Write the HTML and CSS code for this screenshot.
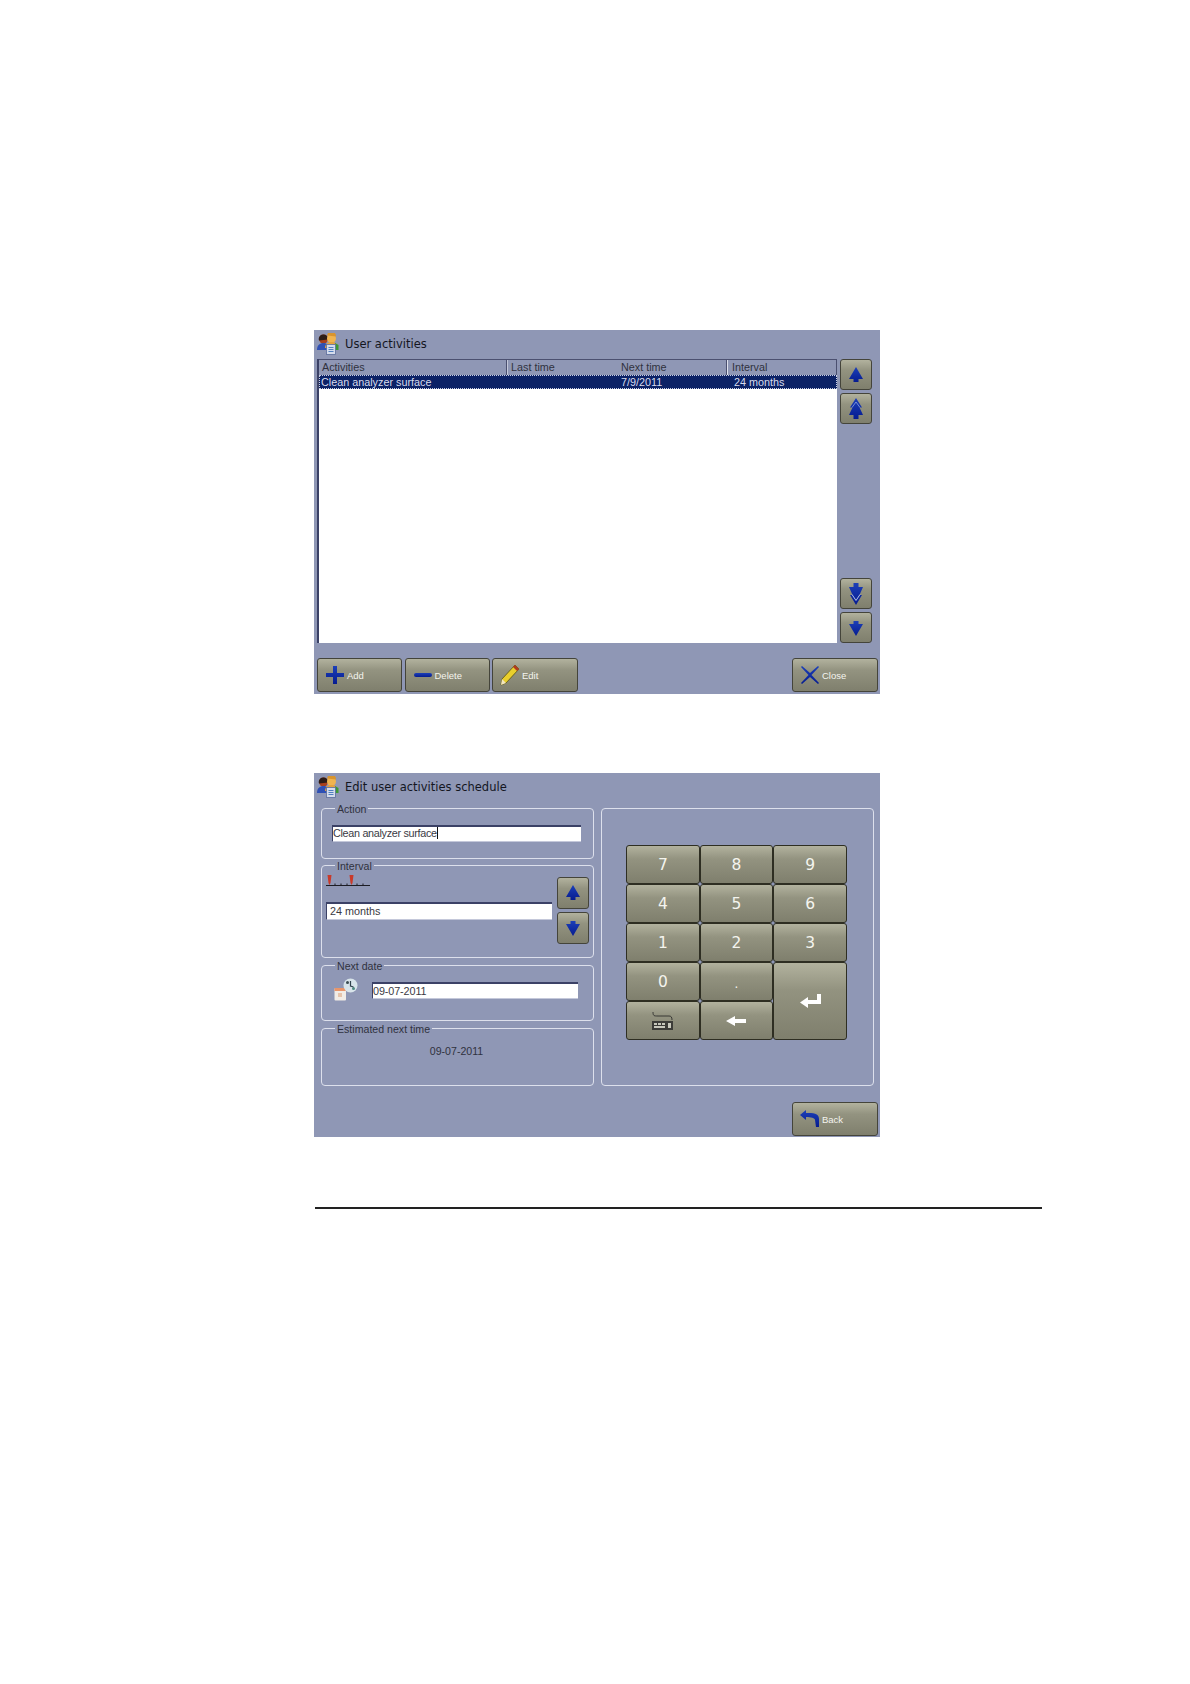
FILE: index.html
```html
<!DOCTYPE html>
<html lang="en">
<head>
    <meta charset="UTF-8">
    <title>User activities</title>
    <link rel="stylesheet" href="styles.css">
</head>
<body>
<svg class="defs" width="0" height="0">
    <defs>
        <linearGradient id="blue" x1="0" y1="0" x2="0" y2="1">
            <stop offset="0" stop-color="#1c3fb8"/>
            <stop offset="1" stop-color="#061c90"/>
        </linearGradient>
        <symbol id="users" viewBox="0 0 22 22">
            <circle cx="6.500" cy="6" r="4.500" fill="#a8401c"/>
            <path d="M6 1.500a4.500 4.500 0 0 0-4 6l9-1a4.500 4.500 0 0 0-5-5z" fill="#2c1c16"/>
            <path d="M0 17c0-5 3-7 6.500-7S12 12 12 17z" fill="#2f50b4"/>
            <circle cx="14.500" cy="5.500" r="4.500" fill="#f0b450"/>
            <path d="M10 2.500a4.500 4.500 0 0 1 9 1z" fill="#d8942e"/>
            <path d="M8 15c0-4 3-6 6.500-6s6.500 2 6.500 6z" fill="#e8a23c"/>
            <path d="M18 10l3.500 2v5H18z" fill="#3c9a34"/>
            <rect x="9.500" y="11.500" width="9" height="10" fill="#d5dcec" stroke="#5a6d9c" stroke-width="0.800"/>
            <path d="M11.500 14.500h5M11.500 16.500h5M11.500 18.500h5" stroke="#4f7fc0" stroke-width="1"/>
        </symbol>
        <symbol id="up" viewBox="0 0 16 16">
            <path d="M8 0L15 12H10.500V15H5.500V12H1z" fill="url(#blue)"/>
        </symbol>
        <symbol id="down" viewBox="0 0 16 16">
            <path d="M5.500 1H10.500V4H15L8 16L1 4H5.500z" fill="url(#blue)"/>
        </symbol>
        <symbol id="up2" viewBox="0 0 16 22">
            <path d="M8 0L14 9.500H11.500L15 17H10.500V21H5.500V17H1L4.500 9.500H2z" fill="url(#blue)"/>
            <path d="M4 9.500L8 4l4 5.500" fill="none" stroke="#8fa4e0" stroke-width="0.800"/>
        </symbol>
        <symbol id="down2" viewBox="0 0 16 22">
            <path d="M5.500 0H10.500V4H15L11.500 12H14L8 22L2 12H4.500L1 4H5.500z" fill="url(#blue)"/>
            <path d="M4 11.500L8 17.500l4-6" fill="none" stroke="#b4c0e8" stroke-width="1"/>
        </symbol>
    </defs>
</svg>

<div class="page">
    <div class="window">
        <div class="title">
            <svg class="title-icon"><use href="#users"/></svg>
            <span>User activities</span>
        </div>
        <div class="list-area">
            <div class="list">
                <div class="list-row list-head">
                    <div class="col-divider">Activities</div>
                    <div>Last time</div>
                    <div class="col-divider">Next time</div>
                    <div class="col-divider">Interval</div>
                </div>
                <div class="list-row selected">
                    <div>Clean analyzer surface</div>
                    <div></div>
                    <div>7/9/2011</div>
                    <div>24 months</div>
                </div>
            </div>
            <div class="scroll-btns">
                <button class="btn square"><svg width="16" height="16"><use href="#up"/></svg></button>
                <button class="btn square"><svg width="16" height="22"><use href="#up2"/></svg></button>
                <div class="spacer"></div>
                <button class="btn square"><svg width="16" height="22"><use href="#down2"/></svg></button>
                <button class="btn square"><svg width="16" height="16"><use href="#down"/></svg></button>
            </div>
        </div>
        <div class="footer first-footer">
            <button class="btn action">
                <svg width="20" height="20" viewBox="0 0 20 20">
                    <path d="M8 1h4v7h7v4h-7v7H8v-7H1V8h7z" fill="url(#blue)"/>
                </svg>
                <span>Add</span>
            </button>
            <button class="btn action">
                <svg width="20" height="20" viewBox="0 0 20 20">
                    <rect x="1" y="8" width="18" height="4" rx="2" fill="url(#blue)"/>
                </svg>
                <span>Delete</span>
            </button>
            <button class="btn action">
                <svg width="20" height="24" viewBox="0 0 20 24">
                    <path d="M15 2l4 4L6 20l-5 2 1-6z" fill="#e9cf2c" stroke="#5c5410" stroke-width="0.800"/>
                    <path d="M15 2l4 4-2 2-4-4z" fill="#b03a20"/>
                    <path d="M1 22l1-6 4 4z" fill="#f2e6c0"/>
                </svg>
                <span>Edit</span>
            </button>
            <button class="btn action push">
                <svg width="20" height="20" viewBox="0 0 20 20">
                    <path d="M2 1l8 7 8-7 1 1-7.500 8L19 18l-1 1-8-7-8 7-1-1 7.500-8L1 2z" fill="url(#blue)"/>
                </svg>
                <span>Close</span>
            </button>
        </div>
    </div>

    <div class="window second">
        <div class="title title-tall">
            <svg class="title-icon"><use href="#users"/></svg>
            <span>Edit user activities schedule</span>
        </div>
        <div class="edit-area">
            <div class="edit-left">
                <div class="group action-group">
                    <div class="legend">Action</div>
                    <div class="field action-field">Clean analyzer surface<i class="caret"></i></div>
                </div>
                <div class="group interval-group">
                    <div class="legend">Interval</div>
                    <div class="interval-row">
                        <div class="interval-left">
                            <svg class="ruler" width="44" height="12" viewBox="0 0 44 12">
                                <path d="M0 10.500h44M9 8.500v2M15 8.500v2M21 8.500v2M31 8.500v2M37 8.500v2" stroke="#1c1c24" stroke-width="1" fill="none"/>
                                <path d="M1.500 0h4l-1 8-1 2-1-2zM23.500 0h4l-1 8-1 2-1-2z" fill="#c83a2a"/>
                            </svg>
                            <div class="field interval-field">24 months</div>
                        </div>
                        <div class="interval-btns">
                            <button class="btn small"><svg width="16" height="16"><use href="#up"/></svg></button>
                            <button class="btn small"><svg width="16" height="16"><use href="#down"/></svg></button>
                        </div>
                    </div>
                </div>
                <div class="group next-group">
                    <div class="legend">Next date</div>
                    <div class="next-row">
                        <svg width="24" height="23" viewBox="0 0 24 23">
                            <rect x="0.500" y="10" width="11.500" height="12.500" rx="1" fill="#f2ece6"/>
                            <rect x="0.500" y="10" width="11.500" height="3" fill="#e8956a"/>
                            <rect x="4" y="15" width="4" height="4" fill="#e6c4ac"/>
                            <circle cx="16.500" cy="7.500" r="7" fill="#d8e4ea"/>
                            <circle cx="13.500" cy="4.500" r="1.500" fill="#3a4a50"/>
                            <circle cx="19.500" cy="10.500" r="1.500" fill="#4e8a80"/>
                            <path d="M16.500 3v5l3 1" stroke="#30424c" stroke-width="1.200" fill="none"/>
                        </svg>
                        <div class="field next-field">09-07-2011</div>
                    </div>
                </div>
                <div class="group est-group">
                    <div class="legend">Estimated next time</div>
                    <div class="est-value">09-07-2011</div>
                </div>
            </div>
            <div class="group keypad-group">
                <div class="keypad">
                    <button class="btn key">7</button>
                    <button class="btn key">8</button>
                    <button class="btn key">9</button>
                    <button class="btn key">4</button>
                    <button class="btn key">5</button>
                    <button class="btn key">6</button>
                    <button class="btn key">1</button>
                    <button class="btn key">2</button>
                    <button class="btn key">3</button>
                    <button class="btn key">0</button>
                    <button class="btn key dot">.</button>
                    <button class="btn key enter">
                        <svg width="23" height="16" viewBox="0 0 23 16">
                            <path d="M18 1h4v10H9v4L1 9.500 9 4v3h9z" fill="#fff"/>
                        </svg>
                    </button>
                    <button class="btn key">
                        <svg width="23" height="20" viewBox="0 0 23 20">
                            <path d="M2 1c0 4 1 4 5 4h11c2 0 3 1 3 4" fill="none" stroke="#222" stroke-width="0.800"/>
                            <rect x="1" y="10" width="21" height="9" fill="#3c3c38"/>
                            <path d="M3 12h3v2H3zM7 12h3v2H7zM11 12h3v2h-3zM3 15h11v2H3zM17 12h3v5h-3z" fill="#c8c8bc"/>
                        </svg>
                    </button>
                    <button class="btn key">
                        <svg width="22" height="12" viewBox="0 0 22 12">
                            <path d="M1 6l9-5v3h11v4H10v3z" fill="#fff"/>
                        </svg>
                    </button>
                </div>
            </div>
        </div>
        <div class="footer">
            <button class="btn action push">
                <svg width="20" height="20" viewBox="0 0 20 20">
                    <path d="M0 6l6-5v3c7 0 13 0 13 6v8h-3l-1-7c0-2-4-3-9-3v3z" fill="url(#blue)"/>
                </svg>
                <span>Back</span>
            </button>
        </div>
    </div>

    <div class="rule"></div>
</div>
</body>
</html>
```

FILE: styles.css
```css
*{
    margin: 0;
    padding: 0;
    box-sizing: border-box;
}
body{
    background-color: white;
    font-family: 'Liberation Sans', Arial, sans-serif;
    color: #2b2d38;
}
.defs{
    display: block;
    height: 0;
}
.page{
    padding: 330px 0 0 314px;
    min-height: 1684px;
}
.window{
    width: 566px;
    height: 364px;
    background-color: #8f97b5;
    padding: 0 2px 0 3px;
}
.window.second{
    margin-top: 79px;
}
.title{
    height: 29px;
    display: flex;
    align-items: center;
    gap: 6px;
    font-family: 'DejaVu Sans', sans-serif;
    font-size: 11.500px;
    color: #14161f;
    padding-bottom: 1px;
}
.title-tall{
    height: 35px;
    padding-bottom: 7px;
}
.title-icon{
    width: 22px;
    height: 22px;
}

/* list */
.list-area{
    display: flex;
    height: 284px;
    gap: 3px;
}
.list{
    width: 520px;
    background-color: white;
    border-left: 2px solid #3b4166;
}
.list-row{
    display: grid;
    grid-template-columns: 188px 111px 109px 1fr;
    font-size: 10.800px;
}
.list-head{
    height: 16px;
    background-color: #8f97b5;
    border-top: 1px solid #4b5070;
    line-height: 15px;
    color: #30323e;
}
.list-head div{
    padding-left: 4px;
}
.list-head div:first-child{
    padding-left: 3px;
}
.list-head div:nth-child(3){
    padding-left: 3px;
}
.list-head div:last-child{
    padding-left: 5px;
}
.list-head .col-divider{
    border-right: 1px solid #4b5070;
}
.list-head div:first-child{
    box-shadow: 1px 0 0 #c4c8da;
}
.list-head div:nth-child(3){
    box-shadow: 1px 0 0 #dfe2ee;
}
.selected{
    height: 14px;
    line-height: 12px;
    background-color: #0c2266;
    color: #d8dcee;
    border: 1px dotted #c9cfe4;
}
.selected div{
    padding-left: 2px;
}
.selected div:first-child{
    padding-left: 1px;
}
.selected div:last-child{
    padding-left: 6px;
}
.scroll-btns{
    width: 32px;
    display: flex;
    flex-direction: column;
    gap: 3px;
}
.spacer{
    flex: 1;
}

/* buttons */
.btn{
    display: flex;
    align-items: center;
    justify-content: center;
    background: linear-gradient(#b2b29e, #939380 35%, #7f7f6d);
    border: 1px solid #44443a;
    border-radius: 3px;
    font-family: 'DejaVu Sans', sans-serif;
    color: #f4f4ee;
}
.square{
    width: 32px;
    height: 31px;
}
.small{
    width: 32px;
    height: 32px;
}
.footer{
    display: flex;
    gap: 2.500px;
    margin-top: 16px;
}
.first-footer{
    margin-top: 15px;
}
.action{
    width: 85px;
    height: 34px;
    justify-content: flex-start;
    padding-left: 7px;
    gap: 2px;
    font-family: 'Liberation Sans', sans-serif;
    font-size: 9.500px;
}
.action:nth-child(3){
    width: 86px;
}
.push{
    width: 86px;
    margin-left: auto;
}

/* edit form */
.edit-area{
    display: flex;
    gap: 7px;
    padding-left: 4px;
}
.edit-left{
    width: 273px;
}
.group{
    border: 1px solid #dde0ec;
    border-radius: 4px;
    font-size: 10.600px;
}
.legend{
    width: fit-content;
    height: 14px;
    line-height: 14px;
    margin: -7px 0 0 13px;
    padding: 0 2px;
    background-color: #8f97b5;
    color: #30323e;
}
.field{
    height: 17px;
    line-height: 14px;
    background-color: white;
    border-top: 2px solid #3b4166;
    border-left: 1px solid #3b4166;
    border-bottom: 1px solid #c4c8da;
    font-size: 10.800px;
    color: #3a3a44;
    white-space: nowrap;
}
.caret{
    display: inline-block;
    width: 1px;
    height: 12px;
    background-color: #111;
    vertical-align: -2px;
}
.action-group{
    height: 51px;
}
.action-field{
    width: 249px;
    margin: 9px 0 0 10px;
    line-height: 13px;
    letter-spacing: -0.300px;
}
.interval-group{
    height: 93px;
    margin-top: 6px;
}
.interval-row{
    display: flex;
    padding: 4px 0 0 4px;
}
.interval-left{
    width: 226px;
}
.ruler{
    display: block;
    margin-top: -2px;
}
.interval-field{
    height: 18px;
    padding-left: 3px;
    margin-top: 15px;
}
.interval-btns{
    display: flex;
    flex-direction: column;
    gap: 3px;
    margin-left: 5px;
}
.next-group{
    height: 56px;
    margin-top: 7px;
}
.next-row{
    display: flex;
    align-items: flex-start;
    gap: 14px;
    padding: 5px 0 0 12px;
}
.next-field{
    width: 206px;
    margin-top: 4px;
    letter-spacing: -0.100px;
}
.est-group{
    height: 58px;
    margin-top: 7px;
}
.est-value{
    text-align: center;
    line-height: 14px;
    padding: 8px 2px 0 0;
    color: #30323e;
}
.keypad-group{
    width: 273px;
    height: 278px;
    padding: 36px 0 0 24px;
}
.keypad{
    display: grid;
    grid-template-columns: repeat(3, 1fr);
    grid-template-rows: repeat(5, 1fr);
    width: 221px;
    height: 195px;
}
.key{
    font-size: 15.500px;
    border-color: #2e2e22;
}
.dot{
    padding-top: 4px;
    font-size: 12px;
}
.enter{
    grid-row: span 2;
}

.rule{
    width: 727px;
    height: 2px;
    background-color: #222;
    margin: 70px 0 0 1px;
}
```
